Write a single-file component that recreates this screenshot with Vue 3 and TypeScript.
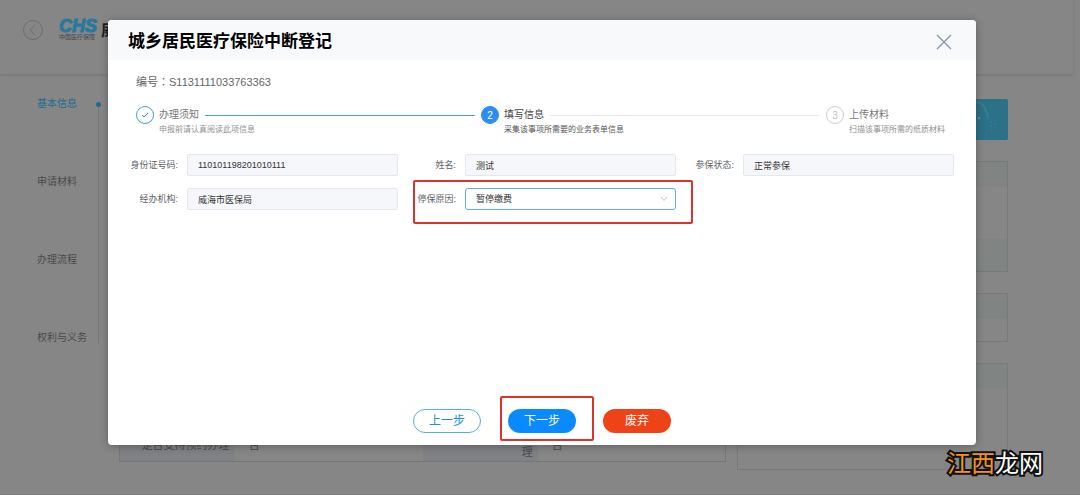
<script setup lang="ts">
import { ref } from 'vue'

interface Step {
  title: string
  desc: string
  state: 'done' | 'current' | 'todo'
}

const steps: Step[] = [
  { title: '办理须知', desc: '申报前请认真阅读此项信息', state: 'done' },
  { title: '填写信息', desc: '采集该事项所需要的业务表单信息', state: 'current' },
  { title: '上传材料', desc: '扫描该事项所需的纸质材料', state: 'todo' },
]

const sections: string[] = ['基本信息', '申请材料', '办理流程', '权利与义务']

const idNumber = ref('110101198201010111')
const fullName = ref('测试')
const insuredState = ref('正常参保')
const agency = ref('威海市医保局')
const reason = ref('暂停缴费')
</script>

<template>
  <div class="page">
    <header class="site-header">
      <button class="back" type="button" aria-label="返回">
        <svg viewBox="0 0 20 20" width="20" height="20" fill="none" stroke="currentColor">
          <circle cx="10" cy="10" r="9.5" />
          <path d="M12 5 L7 10 L12 15" />
        </svg>
      </button>
      <div class="logo">
        <span class="logo-mark">CHS</span>
        <span class="logo-name">中国医疗保障</span>
      </div>
      <span class="site-name">威</span>
    </header>

    <div class="site-body">
      <nav class="sections">
        <a v-for="(name, i) in sections" :key="name" href="#" :class="{ active: i === 0 }">{{ name }}</a>
      </nav>
      <main class="main">
        <table class="info">
          <tbody>
            <tr>
              <th scope="row">是否支持预约办理</th>
              <td>否</td>
              <th scope="row">是否支持全程网上办理</th>
              <td>否</td>
            </tr>
          </tbody>
        </table>
      </main>
      <aside class="aside">
        <div class="banner">
          <svg viewBox="0 0 34 41" width="34" height="41" fill="none" stroke="#4a8697">
            <path d="M2 2 Q12 5 14 20" stroke-width="2" opacity=".4" />
            <path d="M8 4 Q13 10 14 17" opacity=".5" />
            <path d="M17 22 L18 34 M22 20 L20 30" stroke-dasharray="2 2" opacity=".5" />
            <circle cx="5" cy="19" r="1" fill="#8db4be" />
          </svg>
        </div>
        <div class="card card-tall"><div class="card-foot"></div></div>
        <div class="card card-short"></div>
        <div class="card card-last"></div>
      </aside>
    </div>

    <div class="overlay">
      <section class="dialog" role="dialog" aria-labelledby="dialog-title">
        <header class="dialog-header">
          <h1 id="dialog-title">城乡居民医疗保险中断登记</h1>
          <button class="close" type="button" aria-label="关闭">
            <svg viewBox="0 0 16 16" width="16" height="16" fill="none" stroke="currentColor" stroke-width="1.4">
              <path d="M1 1 L15 15 M15 1 L1 15" />
            </svg>
          </button>
        </header>

        <p class="serial">编号<span class="colon">：</span>S1131111033763363</p>

        <ol class="steps">
          <li v-for="(step, i) in steps" :key="step.title" :class="['step', step.state]">
            <span class="step-icon">
              <svg v-if="step.state === 'done'" viewBox="0 0 8 8" width="8" height="8" fill="none" stroke="currentColor">
                <path d="M1 4 L3 6 L7 2" />
              </svg>
              <template v-else>{{ i + 1 }}</template>
            </span>
            <div class="step-body">
              <div class="step-head">
                <span class="step-title">{{ step.title }}</span>
                <span v-if="i < steps.length - 1" class="step-line"></span>
              </div>
              <div class="step-desc">{{ step.desc }}</div>
            </div>
          </li>
        </ol>

        <form class="form" @submit.prevent>
          <div class="field">
            <label for="id-number">身份证号码:</label>
            <input id="id-number" v-model="idNumber" type="text" disabled />
          </div>
          <div class="field">
            <label for="full-name">姓名:</label>
            <input id="full-name" v-model="fullName" type="text" disabled />
          </div>
          <div class="field">
            <label for="insured-state">参保状态:</label>
            <input id="insured-state" v-model="insuredState" type="text" disabled />
          </div>
          <div class="field">
            <label for="agency">经办机构:</label>
            <input id="agency" v-model="agency" type="text" disabled />
          </div>
          <div class="field marked">
            <label for="reason">停保原因:</label>
            <div class="select">
              <select id="reason" v-model="reason">
                <option>暂停缴费</option>
              </select>
              <svg viewBox="0 0 8 6" width="8" height="6" fill="none" stroke="#c0c4cc">
                <path d="M1 1 L4 4.5 L7 1" />
              </svg>
            </div>
          </div>
        </form>

        <footer class="actions">
          <button class="btn plain" type="button">上一步</button>
          <span class="marked">
            <button class="btn primary" type="button">下一步</button>
          </span>
          <button class="btn danger" type="button">废弃</button>
        </footer>
      </section>
    </div>

    <div class="watermark"><span>江西</span>龙网</div>
  </div>
</template>

<style>
body {
  margin: 0;
  background: #868686;
}
</style>

<style scoped>
* {
  box-sizing: border-box;
}

.page {
  position: relative;
  min-height: 100vh;
  overflow: hidden;
  background: #868686;
  border-bottom: 1px solid #7c7c7c;
  color: #4a4a4a;
  font-family: "Liberation Sans", "Noto Sans CJK SC", sans-serif;
  font-size: 10px;
}

button {
  padding: 0;
  border: 0;
  background: none;
  font: inherit;
  cursor: pointer;
}

.site-header {
  display: flex;
  align-items: flex-start;
  height: 74px;
  margin-right: 7px;
  padding: 20px 0 0 23px;
  box-shadow: 0 1px 3px #747474;
}

.back {
  height: 20px;
  color: #6c6c6c;
}

.back svg {
  display: block;
}

.logo {
  display: flex;
  flex-direction: column;
  width: 39px;
  margin-left: 16px;
}

.logo-mark {
  color: #26799f;
  font-size: 18px;
  font-weight: bold;
  font-style: italic;
  line-height: 13px;
  -webkit-text-stroke: 1px #26799f;
}

.logo-name {
  font-size: 6px;
  line-height: 8px;
  white-space: nowrap;
}

.site-name {
  margin-left: 3px;
  color: #1c1c1c;
  font-size: 17px;
  font-weight: bold;
  line-height: 22px;
}

.site-body {
  display: grid;
  grid-template-columns: 62px 1fr 271px;
  padding: 25px 72px 24px 37px;
}

.sections {
  position: relative;
  display: flex;
  flex-direction: column;
  align-self: start;
  gap: 68px;
}

.sections::before {
  content: "";
  position: absolute;
  top: 5px;
  bottom: 0;
  right: 0;
  width: 1px;
  background: #767676;
}

.sections a {
  position: relative;
  color: #4a4a4a;
  line-height: 10px;
  text-decoration: none;
}

.sections a.active {
  color: #1c6c90;
}

.sections a.active::after {
  content: "";
  position: absolute;
  top: 3px;
  right: -2px;
  width: 5px;
  height: 5px;
  border-radius: 50%;
  background: #1c6c90;
}

.main {
  display: flex;
  align-items: flex-end;
  padding: 0 11px 8px 20px;
}

.info {
  width: 100%;
  border: 1px solid #75767a;
  border-collapse: collapse;
  table-layout: fixed;
  font-size: 11px;
  line-height: 15px;
}

.info th {
  width: 19%;
  padding: 1px 5px;
  background: #808185;
  font-weight: normal;
  text-align: right;
}

.info td {
  padding: 1px 14px;
}

.aside {
  display: flex;
  flex-direction: column;
  gap: 21px;
}

.banner {
  display: flex;
  justify-content: flex-end;
  height: 41px;
  overflow: hidden;
  border-radius: 2px;
  background: #2b7187;
}

.card {
  display: flex;
  flex-direction: column;
  justify-content: flex-end;
  border: 1px solid #787a7a;
  background: linear-gradient(#808483 25px, transparent 25px);
}

.card-tall {
  height: 111px;
}

.card-short {
  height: 49px;
}

.card-last {
  height: 107px;
}

.card-foot {
  height: 32px;
  background: #808483;
}

.overlay {
  position: absolute;
  inset: 0;
  display: flex;
  padding: 20px 104px 49px 108px;
}

.dialog {
  display: flex;
  flex: 1;
  flex-direction: column;
  overflow: hidden;
  border-radius: 4px;
  background: #fff;
  box-shadow: 0 1px 8px rgba(0, 0, 0, 0.3);
}

.dialog-header {
  display: flex;
  align-items: center;
  justify-content: space-between;
  height: 40px;
  padding: 4px 24px 0 20px;
  background: #f8f9fb;
}

.dialog-header h1 {
  margin: 0;
  color: #000;
  font-size: 17px;
  line-height: 24px;
}

.close {
  height: 16px;
  color: #8595b8;
}

.close svg {
  display: block;
}

.serial {
  margin: 13px 0 0 28px;
  color: #666;
  font-size: 11px;
  line-height: 16px;
}

.colon {
  font-family: "Noto Sans CJK TC", sans-serif;
}

.steps {
  display: flex;
  margin: 16px 31px 0 28px;
  padding: 0;
  list-style: none;
}

.step {
  display: flex;
  flex: 1;
  gap: 5px;
  padding-right: 6px;
  color: #777;
}

.step:last-child {
  flex: none;
  padding-right: 0;
}

.step-icon {
  display: flex;
  align-items: center;
  justify-content: center;
  width: 18px;
  height: 18px;
  border: 1px solid #ccc;
  border-radius: 50%;
  color: #c0c0c0;
}

.done .step-icon {
  border-color: #409fd8;
  color: #2d8cc8;
}

.current .step-icon {
  border-color: #2d8cf0;
  background: #2d8cf0;
  color: #fff;
}

.step-body {
  flex: 1;
}

.step-head {
  display: flex;
  align-items: center;
  gap: 6px;
  line-height: 18px;
}

.step-title {
  white-space: nowrap;
}

.current .step-title {
  color: #444;
}

.step-line {
  flex: 1;
  height: 1px;
  background: #e8eaec;
}

.done .step-line {
  background: #4ba5c8;
}

.step-desc {
  color: #909090;
  font-size: 8px;
  line-height: 12px;
  white-space: nowrap;
}

.current .step-desc {
  color: #555;
}

.form {
  display: grid;
  grid-template-columns: repeat(3, 1fr);
  gap: 12px 0;
  margin: 18px 22px 0 12px;
}

.field {
  display: flex;
  align-items: center;
  gap: 9px;
}

.field label {
  width: 58px;
  color: #606266;
  font-size: 9px;
  line-height: 22px;
  text-align: right;
  white-space: nowrap;
}

.field input,
.field select {
  flex: 1;
  width: 100%;
  min-width: 0;
  height: 22px;
  margin: 0;
  padding: 0 10px;
  border: 1px solid #e4e7ed;
  border-radius: 2px;
  background: #f5f7fa;
  color: #333;
  font-family: inherit;
  font-size: 9px;
  opacity: 1;
}

.select {
  position: relative;
  display: flex;
  flex: 1;
}

.field select {
  appearance: none;
  border-color: #64abe0;
  border-radius: 3px;
  background: #fff;
}

.select svg {
  position: absolute;
  top: 8px;
  right: 8px;
  pointer-events: none;
}

.marked {
  position: relative;
}

.marked::after {
  content: "";
  position: absolute;
  border: 2px solid #d9342b;
  border-radius: 2px;
  pointer-events: none;
}

.field.marked::after {
  inset: -8px -17px -14px 15px;
}

.actions .marked::after {
  inset: -13px -18px -8px -8px;
}

.actions {
  display: flex;
  justify-content: center;
  gap: 27px;
  margin-top: auto;
  padding: 16px 0 12px;
}

.btn {
  display: block;
  width: 68px;
  height: 24px;
  border-radius: 12px;
  color: #fff;
  font-size: 12px;
  line-height: 22px;
}

.btn.plain {
  border: 1px solid #5badd8;
  color: #2290cf;
}

.btn.primary {
  background: #0a8aff;
}

.btn.danger {
  background: #ee4316;
}

.watermark {
  position: absolute;
  right: 37px;
  bottom: 17px;
  color: #fff;
  font-size: 24px;
  line-height: 26px;
  paint-order: stroke fill;
  -webkit-text-stroke: 4px #111;
}

.watermark span {
  color: #f0941d;
}
</style>
